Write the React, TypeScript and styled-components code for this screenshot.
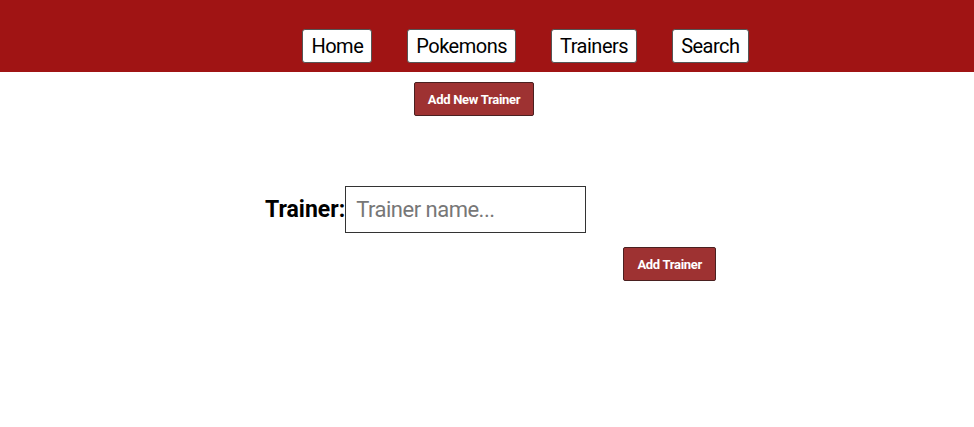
import React from "react";
import styled, { createGlobalStyle } from "styled-components";

const Global = createGlobalStyle`
  html, body { margin: 0; padding: 0; background: #fff; }
  body { font-family: Roboto, "Liberation Sans", sans-serif; }
`;

const Header = styled.header`
  background: #a01414;
  height: 72px;
  box-sizing: border-box;
  padding: 29px 0 0 77px;
  display: flex;
  justify-content: center;
  align-items: flex-start;
`;

const Nav = styled.nav`
  display: flex;
  gap: 35px;
`;

const NavButton = styled.button`
  height: 34px;
  box-sizing: border-box;
  padding: 0 8px;
  background: #fff;
  border: 1px solid #555;
  border-radius: 3px;
  font-family: Roboto, "Liberation Sans", sans-serif;
  font-size: 20px;
  letter-spacing: -0.5px;
  color: #000;
  cursor: pointer;
`;

const Toolbar = styled.div`
  display: flex;
  justify-content: center;
  padding: 10px 26px 0 0;
`;

const RedButton = styled.button`
  height: 34px;
  box-sizing: border-box;
  padding: 0 13px;
  background: #9e3232;
  color: #fff;
  border: 1px solid #4a2020;
  border-radius: 2px;
  font-family: Roboto, "Liberation Sans", sans-serif;
  font-weight: 700;
  font-size: 13px;
  letter-spacing: -0.3px;
  cursor: pointer;
`;

const Form = styled.form`
  width: 458px;
  box-sizing: border-box;
  margin: 70px auto 0;
  padding-left: 7px;
  display: flex;
  flex-direction: column;
  gap: 14px;
`;

const Row = styled.div`
  display: flex;
  align-items: center;
`;

const Label = styled.label`
  font-family: Roboto, "Liberation Sans", sans-serif;
  font-weight: 700;
  font-size: 23px;
  color: #000;
`;

const Input = styled.input`
  width: 241px;
  height: 47px;
  box-sizing: border-box;
  border: 1px solid #333;
  padding: 0 10px;
  font-family: Roboto, "Liberation Sans", sans-serif;
  font-size: 22px;
  letter-spacing: -0.5px;
  outline: none;
  &::placeholder { color: #777; }
`;

const Actions = styled.div`
  display: flex;
  justify-content: flex-end;
`;

export default function App() {
  return (
    <>
      <Global />
      <Header>
        <Nav>
          <NavButton>Home</NavButton>
          <NavButton>Pokemons</NavButton>
          <NavButton>Trainers</NavButton>
          <NavButton>Search</NavButton>
        </Nav>
      </Header>
      <Toolbar>
        <RedButton>Add New Trainer</RedButton>
      </Toolbar>
      <Form onSubmit={(e) => e.preventDefault()}>
        <Row>
          <Label htmlFor="trainer">Trainer:</Label>
          <Input id="trainer" placeholder="Trainer name..." />
        </Row>
        <Actions>
          <RedButton>Add Trainer</RedButton>
        </Actions>
      </Form>
    </>
  );
}
